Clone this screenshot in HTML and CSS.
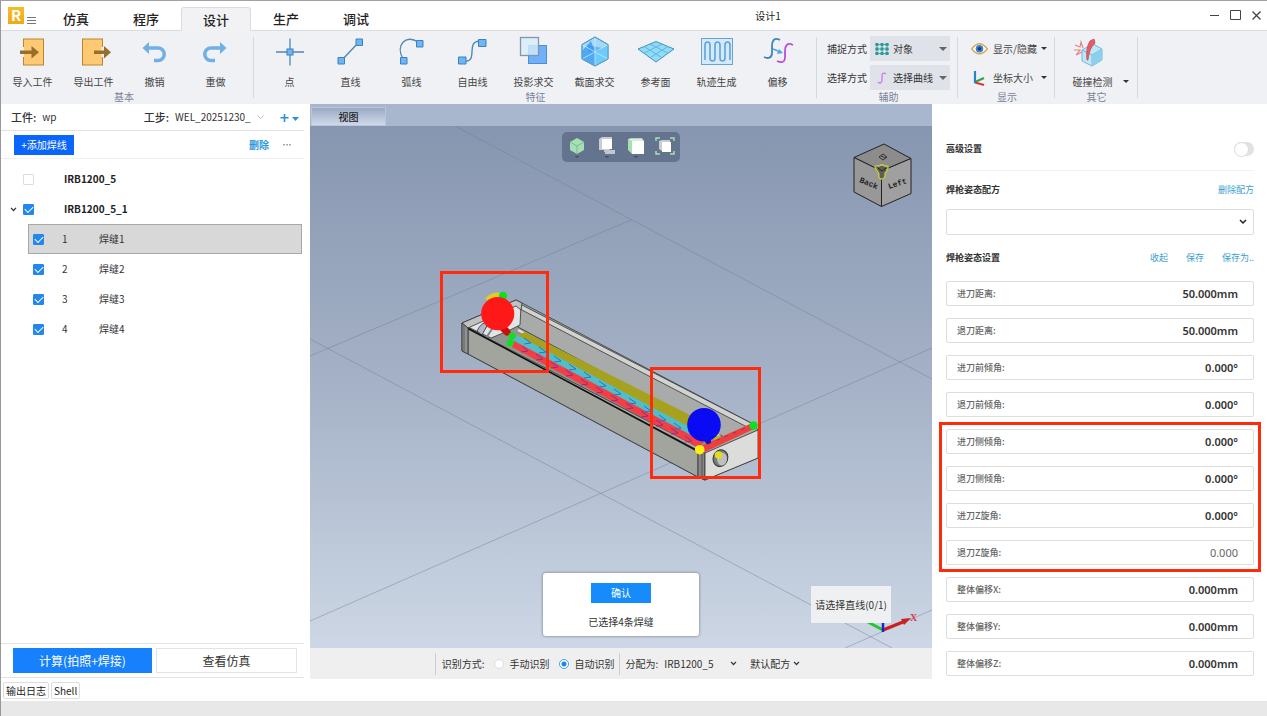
FILE: index.html
```html
<!DOCTYPE html>
<html lang="zh-CN">
<head>
<meta charset="utf-8">
<title>设计1</title>
<link rel="stylesheet" href="styles.css">
</head>
<body>
<div class="app">
  <header class="titlebar">
    <div class="brand">
      <span class="logo">R</span>
      <button class="menu-btn" aria-label="菜单"><svg width="9" height="7" viewBox="0 0 9 7"><path d="M0 .5h9M0 3.5h9M0 6.5h9" stroke="#777" fill="none"/></svg></button>
    </div>
    <nav class="tabs">
      <button class="tab">仿真</button>
      <button class="tab">程序</button>
      <button class="tab tab-active">设计</button>
      <button class="tab">生产</button>
      <button class="tab">调试</button>
    </nav>
    <h1 class="doc-title">设计1</h1>
    <div class="win-controls">
      <button aria-label="最小化"><svg width="11" height="11" viewBox="0 0 11 11"><path d="M1 5.5h9" stroke="#444" fill="none"/></svg></button>
      <button aria-label="最大化"><svg width="11" height="11" viewBox="0 0 11 11"><path d="M.5 .5h10v9h-10z" stroke="#444" fill="none"/></svg></button>
      <button aria-label="关闭"><svg width="11" height="11" viewBox="0 0 11 11"><path d="M1.500 1.500l8 8m0-8l-8 8" stroke="#444" stroke-width="1.300" fill="none"/></svg></button>
    </div>
  </header>

  <div class="ribbon">
    <section class="group group-basic">
      <div class="tools">
        <button class="tool"><svg width="32" height="32" viewBox="0 0 32 32"><rect x="6.500" y="3" width="20" height="26" fill="#ffc973" stroke="#b8862f"/><path d="M5 11v10" stroke="#f0f1f5" stroke-width="4"/><path d="M3 14.500h11.500V10l7.500 6.200-7.500 6.200V18H3z" fill="#96702a"/></svg>导入工件</button>
        <button class="tool"><svg width="32" height="32" viewBox="0 0 32 32"><rect x="4.500" y="3" width="20" height="26" fill="#ffc973" stroke="#b8862f"/><path d="M25 11v10" stroke="#f0f1f5" stroke-width="3"/><path d="M16 14.500h10V10l7 6.200-7 6.200V18H16z" fill="#96702a"/></svg>导出工件</button>
        <button class="tool"><svg width="32" height="32" viewBox="0 0 32 32"><path d="M9 12h10a6 6 0 0 1 0 12.500h-4" fill="none" stroke="#6eb0e8" stroke-width="3.500"/><path d="M3.500 12l6.500-6v12z" fill="#6eb0e8"/></svg>撤销</button>
        <button class="tool"><svg width="32" height="32" viewBox="0 0 32 32"><path d="M21 12H11a6 6 0 0 0 0 12.500h4" fill="none" stroke="#6eb0e8" stroke-width="3.500"/><path d="M26.500 12L20 6v12z" fill="#6eb0e8"/></svg>重做</button>
      </div>
      <p class="group-name">基本</p>
    </section>
    <section class="group group-feature">
      <div class="tools">
        <button class="tool"><svg width="32" height="32" viewBox="0 0 32 32"><path d="M16 2.500v27M2 16h28" stroke="#4f88b4" stroke-width="1.300"/><rect x="13" y="13" width="6" height="6" fill="#6fb5f0" stroke="#3c80bd"/></svg>点</button>
        <button class="tool"><svg width="32" height="32" viewBox="0 0 32 32"><path d="M6 25L24 6" stroke="#4f88b4" stroke-width="1.400"/><path d="M3 21.500h6.500V28H3zM21 3h6.500v6.500H21z" fill="#6fb5f5" stroke="#3c80bd"/></svg>直线</button>
        <button class="tool"><svg width="32" height="32" viewBox="0 0 32 32"><path d="M7 23C-1 9 10-2 22 6" fill="none" stroke="#4f88b4" stroke-width="1.400"/><path d="M4.500 21.500H11V28H4.500zM20.500 4.500H27V11h-6.500z" fill="#6fb5f5" stroke="#3c80bd"/></svg>弧线</button>
        <button class="tool"><svg width="32" height="32" viewBox="0 0 32 32"><path d="M6 25c17 3 1-21 18-20" fill="none" stroke="#4f88b4" stroke-width="1.400"/><path d="M1.500 21H9v7H1.500zM21.500 3.500H29v7h-7.500z" fill="#6fb5f5" stroke="#3c80bd"/></svg>自由线</button>
        <button class="tool"><svg width="32" height="32" viewBox="0 0 32 32"><rect x="10.500" y="9.500" width="18" height="18" fill="#6fb0f8" stroke="#4d8fd2"/><rect x="2.500" y="1.500" width="18" height="18" fill="#d7edf7" fill-opacity=".8" stroke="#8298aa" stroke-width="1.300"/></svg>投影求交</button>
        <button class="tool"><svg width="32" height="32" viewBox="0 0 32 32"><path d="M16 1l13 7.500V23L16 30 3 23V8.500z" fill="#a3d9f6" stroke="#5a9cc4"/><path d="M3 15l9-10 4 11v14L3 23z" fill="#4fa9f4"/><path d="M16 16l13-7.500V23l-13 7z" fill="#6ccbfa"/><path d="M9 9l14 3-7 6-7-3z" fill="#3194ed" opacity=".5"/><path d="M3 8.500L16 16l13-7.500M16 16v14M16 1v15L3 23m13-7l13 7" stroke="#d0efff" stroke-opacity=".7" fill="none"/><path d="M16 1l13 7.500V23L16 30 3 23V8.500z" fill="none" stroke="#5a9cc4"/></svg>截面求交</button>
        <button class="tool"><svg width="36" height="32" viewBox="0 0 36 32"><path d="M18 5.500L36 13 18 26 0 13z" fill="#8edbfa" stroke="#3f94b8"/><path d="M12 8l18 9.300M6 10.500l18 11.300M24 8L6 17.300M30 10.500L12 21.800" stroke="#67b4d6" fill="none"/></svg>参考面</button>
        <button class="tool"><svg width="32" height="32" viewBox="0 0 32 32"><rect x=".5" y="2.500" width="31" height="26" fill="#d5e9fb" stroke="#6aa3ce"/><path d="M4 24V9c0-4 5-4 5 0v13c0 4 5 4 5 0V9c0-4 5-4 5 0v13c0 4 5 4 5 0V9c0-4 5-4 5 0v15" fill="none" stroke="#5da3dc" stroke-width="1.600"/></svg>轨迹生成</button>
        <button class="tool"><svg width="32" height="32" viewBox="0 0 32 32"><path d="M18 4C12 1 10 5 10 10v7c0 5-4 6-8 4" fill="none" stroke="#3f86b8" stroke-width="1.800"/><path d="M31 9c-6-3-8 1-8 6v6c0 6-4 6-8 4" fill="none" stroke="#b650dc" stroke-width="1.800"/><path d="M11 13l5 2" stroke="#4da3e8" stroke-width="1.500"/><path d="M21 17l-6 1 2-5z" fill="#4da3e8"/></svg>偏移</button>
      </div>
      <p class="group-name">特征</p>
    </section>
    <section class="group group-assist">
      <div class="rows">
        <div class="assist-row"><label for="snap">捕捉方式</label>
          <div class="pick"><svg width="16" height="14" viewBox="0 0 16 14"><path d="M3 1v12M8 1v12M13 1v12M1 2.500h14M1 7h14M1 11.500h14" stroke="#55aaa6"/><path d="M1.500 1h3v3h-3zM6.500 1h3v3h-3zM11.500 1h3v3h-3zM1.500 5.500h3v3h-3zM6.500 5.500h3v3h-3zM11.500 5.500h3v3h-3zM1.500 10h3v3h-3zM6.500 10h3v3h-3zM11.500 10h3v3h-3z" fill="#279c97"/></svg><select id="snap"><option>对象</option></select><i class="caret"></i></div></div>
        <div class="assist-row"><label for="choose">选择方式</label>
          <div class="pick"><svg width="16" height="14" viewBox="0 0 16 14"><path d="M12 3C9 1 8 3 8 5v4c0 3-2 4-4 2" fill="none" stroke="#c979e8" stroke-width="1.300"/></svg><select id="choose"><option>选择曲线</option></select><i class="caret"></i></div></div>
      </div>
      <p class="group-name">辅助</p>
    </section>
    <section class="group group-view">
      <div class="rows">
        <button class="mini"><svg width="17" height="14" viewBox="0 0 17 14"><path d="M.7 7Q8.500-3.500 16.300 7 8.500 16.500.7 7z" fill="#fff" stroke="#d3a84a" stroke-width="1.300"/><circle cx="8.500" cy="6.700" r="3.800" fill="#3a7fd0"/><circle cx="8.500" cy="6.700" r="1.700" fill="#173d70"/></svg><span>显示/隐藏</span><i class="caret caret-s"></i></button>
        <button class="mini"><svg width="17" height="18" viewBox="0 0 17 18"><path d="M4 13l9-4" stroke="#2da74a" stroke-width="2.200"/><path d="M4 13.500l9 2.500" stroke="#d93636" stroke-width="2.200"/><path d="M4 2v12" stroke="#2485cc" stroke-width="2.200"/></svg><span>坐标大小</span><i class="caret caret-s"></i></button>
      </div>
      <p class="group-name">显示</p>
    </section>
    <section class="group group-other">
      <div class="tools">
        <button class="tool tool-drop"><svg width="32" height="32" viewBox="0 0 32 32"><path d="M9 14l11-6 9 5v11l-10 6-10-5z" fill="#bfe8f7" stroke="#72b7d4"/><path d="M9 14l10 5 10-6M19 19v11" fill="none" stroke="#72b7d4"/><path d="M19 19l10-6v11l-10 6z" fill="#8dd0ec"/><path d="M14 24c-1-8 0-14 3-19l4-2 1 4c-5 5-6 10-7 17z" fill="#e45d66" stroke="#cb4a56" stroke-width=".8"/><path d="M2 9l5 2 1-5 2 6M1 14l6 0-4 5 6-3" fill="none" stroke="#e98086" stroke-width="1.200"/></svg><span>碰撞检测</span></button>
        <i class="caret caret-s"></i>
      </div>
      <p class="group-name">其它</p>
    </section>
  </div>

  <main class="workspace">
    <aside class="left">
      <div class="job">
        <span class="key">工件:</span><span>wp</span>
        <label class="key step" for="step">工步:</label>
        <div class="plain-select"><select id="step"><option>WEL_20251230_</option></select><svg width="7" height="5" viewBox="0 0 7 5"><path d="M.5.500l3 3 3-3" fill="none" stroke="#bbb"/></svg></div>
        <button class="add-step" aria-label="新建工步"><svg width="19" height="9" viewBox="0 0 19 9"><path d="M4.500 1v8M.5 4.800h8" stroke="#2490e4" stroke-width="1.600"/><path d="M12 4h7l-3.500 4z" fill="#2490e4"/></svg></button>
      </div>
      <div class="actions">
        <button class="add-line">+添加焊线</button>
        <button class="del">删除</button>
        <button class="more" aria-label="更多"><svg width="8" height="2" viewBox="0 0 8 2"><path d="M0 0h2v1.500H0zM3 0h2v1.500H3zM6 0h2v1.500H6z" fill="#aaa"/></svg></button>
      </div>
      <ul class="tree">
        <li class="node"><span class="twist"></span><input type="checkbox" id="n0"><label for="n0">IRB1200_5</label></li>
        <li class="node"><svg class="twist" width="7" height="5" viewBox="0 0 7 5"><path d="M1 .8l2.500 2.700L6 .8" fill="none" stroke="#333" stroke-width="1.200"/></svg><input type="checkbox" id="n1" checked><label for="n1">IRB1200_5_1</label></li>
        <li class="seam seam-on"><input type="checkbox" id="s1" checked><label for="s1"><span>1</span>焊缝1</label></li>
        <li class="seam"><input type="checkbox" id="s2" checked><label for="s2"><span>2</span>焊缝2</label></li>
        <li class="seam"><input type="checkbox" id="s3" checked><label for="s3"><span>3</span>焊缝3</label></li>
        <li class="seam"><input type="checkbox" id="s4" checked><label for="s4"><span>4</span>焊缝4</label></li>
      </ul>
      <div class="run">
        <button class="run-main">计算(拍照+焊接)</button>
        <button class="run-alt">查看仿真</button>
      </div>
    </aside>

    <section class="center">
      <div class="view-tabs"><button class="view-tab">视图</button></div>
      <div class="viewport">
        <svg class="scene" viewBox="310 126 622 522" preserveAspectRatio="xMidYMid slice">
          <g stroke="#707e93" stroke-opacity=".45" fill="none">
            <path d="M455 126L932 379M310 356L631 220M310 339L892 648M310 621L932 348M845 648L932 610"/>
          </g>
          <g stroke="#333" stroke-width=".8" stroke-linejoin="round">
            <path d="M462 323L516 300l6 3L753 424l5 6v28l-53 22-7-3-230-123-6-3z" fill="#a6aaa6"/>
            <path d="M468 328L520 306 747 427l-45 22z" fill="#92948f"/>
            <path d="M520 307L750 427l-26 10L518 327z" fill="#a9abab"/>
            <path d="M520 304L753 424l-6 3L520 309z" fill="#d1d3d1"/>
            <path d="M518 330L720 436" stroke="#e4e4df" stroke-width="2"/>
            <path d="M468 327l17-9 13 2 16-16 7 2-1 19-12 6-17 7z" fill="#e3e4e4"/>
            <path d="M462 323l54-23 6 3-1 7-5-4-48 22z" fill="#bfc2bf"/>
            <path d="M480 335l10-14M486 338l8-12" stroke="#7c8392" stroke-width="2"/>
            <path d="M477 331q4-9 12-9l-7 13z" fill="#aeb8cb"/>
          </g>
          <path d="M516 336l9-4 165 83v18z" fill="#a6a21f"/>
          <path d="M513 340l4-5 176 94 10 13z" fill="#51bdcb"/>
          <path d="M512 347l2-6 190 101-5 6z" fill="#f23f46"/>
          <path d="M524 338l7 5-7 1m15 3l7 5-7 1m15 3l7 5-7 1m15 2l7 5-7 1m15 2l7 5-7 1m15 3l7 5-7 1m15 2l7 5-7 1m15 3l7 5-7 1m15 2l7 5-7 1m15 3l7 5-7 1m15 2l7 5-7 1" fill="none" stroke="#2773c4"/>
          <path d="M522 346l6 5-7 1m15 2l7 5-7 1m15 2l7 5-7 1m15 2l7 5-7 1m15 3l7 5-7 1m15 2l7 5-7 1m15 2l7 5-7 1m15 2l7 5-7 1m15 2l7 5-7 1m15 3l7 5-7 1m15 2l7 5-7 1m14 2l7 5-7 1" fill="none" stroke="#9a2a80"/>
          <g stroke="#333" stroke-width=".8" stroke-linejoin="round">
            <path d="M468 328l230 124v25L468 354z" fill="#a2a49e"/>
            <path d="M467 328l231 123" stroke="#111" stroke-width="1.500"/>
            <path d="M462 323l6 5v26l-6-3z" fill="#8f928f"/>
            <path d="M464 325v27" stroke="#555"/>
            <path d="M698 451l7 2v27l-7-3z" fill="#858785"/>
            <path d="M702 452v27" stroke="#444"/>
            <path d="M705 453l53-23v28l-53 22z" fill="#dcdddb"/>
          </g>
          <path d="M701 446l49-22 6 4-51 24z" fill="#ee3f3f"/>
          <path d="M708 444l42-18" stroke="#983078" stroke-dasharray="4 5"/>
          <ellipse cx="720.500" cy="458" rx="7.300" ry="8.500" fill="#777b7a" stroke="#333" transform="rotate(20 720 458)"/>
          <ellipse cx="722" cy="459" rx="5" ry="6.500" fill="#bcc0bc"/>
          <circle cx="718.500" cy="455" r="3.800" fill="#e3dc1c"/>
          <path d="M703 432l5 9" stroke="#1212a8" stroke-width="6" stroke-linecap="round"/>
          <path d="M714 439l6-3" stroke="#b8b324" stroke-width="3"/>
          <circle cx="704" cy="424.700" r="16.800" fill="#0a0af5"/>
          <circle cx="699.700" cy="449.700" r="4.800" fill="#ffef0a"/>
          <circle cx="753.500" cy="425.500" r="4.200" fill="#0be21a"/>
          <path d="M487 300q7-7 15-4" stroke="#ddcf2a" stroke-width="5" fill="none"/>
          <path d="M497 301l6-4" stroke="#e04a20" stroke-width="4"/>
          <circle cx="503" cy="296" r="4.200" fill="#10df20"/>
          <path d="M500 325l7 7" stroke="#c90e0e" stroke-width="7" stroke-linecap="round"/>
          <circle cx="497.700" cy="313.700" r="16.600" fill="#ff1818"/>
          <circle cx="512" cy="336" r="3.600" fill="#10df20"/>
          <circle cx="510" cy="343" r="3.600" fill="#10df20"/>
          <g fill="none" stroke="#ff2b0c" stroke-width="3">
            <path d="M441.500 272.500h106v99h-106zM651.500 368.500h108v109h-108z"/>
          </g>
          <g stroke="#222" stroke-width="1" stroke-linejoin="round">
            <path d="M884 144l27 14.500-29.500 12.500L854 157.500z" fill="#8c8c8c"/>
            <path d="M854 157.500L881.500 171v35.500L854 192z" fill="#989898"/>
            <path d="M911 158.500L881.500 171v35.500l29.500-13z" fill="#a0a0a0"/>
          </g>
          <path d="M876 169q-3-4 3-3 3-2 6 0 5 0 2 4 0 2-2 3 1 6-4 6-3-1-2-5-1-2-3-5z" fill="#5e6058" stroke="#c9cf3e" stroke-width="1.300"/>
          <path d="M878 168l4 3 4-3" fill="none" stroke="#222"/>
          <text class="cube-text" x="859" y="182" transform="rotate(22 859 182)">Back</text>
          <text class="cube-text" x="889" y="189" transform="rotate(-18 889 189)">Left</text>
          <path d="M879 157l4-3 4 3-4 3zM881 156l5 2" fill="none" stroke="#333"/>
          <path d="M883 630l-17-9" stroke="#22c52b" stroke-width="3"/>
          <path d="M883 630l20-8" stroke="#cc2020" stroke-width="3.500"/>
          <path d="M911 618l-7 7-3-6z" fill="#cc2020"/>
          <path d="M883 632v-9" stroke="#2222cc" stroke-width="2.500"/>
          <text class="axis-text" x="910" y="621">X</text>
        </svg>
        <div class="view-tools">
          <button aria-label="视角"><svg width="20" height="22" viewBox="0 0 20 22"><path d="M10 2l7 4v8l-7 4-7-4V6z" fill="#a5dfb2"/><path d="M3 6l7 4 7-4M10 10v8" stroke="#7dbb92" fill="none"/><path d="M7.500 20h5L10 22z" fill="#444f66"/></svg></button>
          <button aria-label="显示样式"><svg width="20" height="22" viewBox="0 0 20 22"><path d="M3 3l3-2h10v11l-3 2H3z" fill="#c9ccd3"/><path d="M6 3h10v10H6z" fill="#fff"/><path d="M8 15h11M9 17h10" stroke="#dfe2e8" stroke-width="1.500"/><path d="M8.500 20h5L11 22z" fill="#444f66"/></svg></button>
          <button aria-label="剖切"><svg width="20" height="22" viewBox="0 0 20 22"><path d="M2 3l3-1h11l2 3v13H6l-4-4z" fill="#a5dfb2"/><path d="M6 5h12v13H6z" fill="#fff"/><path d="M2 3h13l3 2H6z" fill="#dfeee4"/><path d="M7.500 20h5L10 22z" fill="#444f66"/></svg></button>
          <button aria-label="适合窗口"><svg width="20" height="22" viewBox="0 0 20 22"><path d="M1 5V2h4M15 2h4v3M1 15v3h4M15 18h4v-3" fill="none" stroke="#a5dfb2" stroke-width="1.500"/><path d="M4 5l3-1h8v9l-1 2H7l-3-2z" fill="#c9ccd3"/><path d="M7 6h9v10H7z" fill="#fff"/></svg></button>
        </div>
        <div class="confirm">
          <button>确认</button>
          <p>已选择4条焊缝</p>
        </div>
        <p class="hint">请选择直线(0/1)</p>
      </div>
      <div class="mode-bar">
        <span class="part first">识别方式:</span>
        <label class="opt"><input type="radio" name="mode">手动识别</label>
        <label class="opt"><input type="radio" name="mode" checked>自动识别</label>
        <label class="part assign" for="robot">分配为:</label>
        <div class="plain-select robot"><select id="robot"><option>IRB1200_5</option></select><svg width="7" height="5" viewBox="0 0 7 5"><path d="M1 .8l2.500 2.700L6 .8" fill="none" stroke="#333" stroke-width="1.200"/></svg></div>
        <div class="plain-select recipe"><select aria-label="配方"><option>默认配方</option></select><svg width="7" height="5" viewBox="0 0 7 5"><path d="M1 .8l2.500 2.700L6 .8" fill="none" stroke="#333" stroke-width="1.200"/></svg></div>
      </div>
    </section>

    <aside class="right">
      <div class="adv"><label for="adv">高级设置</label><input class="toggle" type="checkbox" id="adv"></div>
      <div class="sub"><label class="sub-name" for="recipe">焊枪姿态配方</label><a href="#">删除配方</a></div>
      <div class="recipe-box"><select id="recipe"><option></option></select><svg width="8" height="6" viewBox="0 0 8 6"><path d="M1 1l3 3 3-3" fill="none" stroke="#222" stroke-width="1.500"/></svg></div>
      <div class="sub"><span class="sub-name">焊枪姿态设置</span><a href="#">收起</a><a href="#">保存</a><a href="#">保存为..</a></div>
      <div class="fields">
        <div class="field"><label for="f1">进刀距离:</label><input id="f1" value="50.000mm"></div>
        <div class="field"><label for="f2">退刀距离:</label><input id="f2" value="50.000mm"></div>
        <div class="field"><label for="f3">进刀前倾角:</label><input id="f3" value="0.000°"></div>
        <div class="field"><label for="f4">退刀前倾角:</label><input id="f4" value="0.000°"></div>
        <div class="marked">
          <div class="field"><label for="f5">进刀侧倾角:</label><input id="f5" value="0.000°"></div>
          <div class="field"><label for="f6">退刀侧倾角:</label><input id="f6" value="0.000°"></div>
          <div class="field"><label for="f7">进刀Z旋角:</label><input id="f7" value="0.000°"></div>
          <div class="field"><label for="f8">退刀Z旋角:</label><input id="f8" class="unset" value="0.000"></div>
        </div>
        <div class="field"><label for="f9">整体偏移X:</label><input id="f9" value="0.000mm"></div>
        <div class="field"><label for="f10">整体偏移Y:</label><input id="f10" value="0.000mm"></div>
        <div class="field"><label for="f11">整体偏移Z:</label><input id="f11" value="0.000mm"></div>
      </div>
    </aside>
  </main>

  <div class="docks"><button>输出日志</button><button>Shell</button></div>
  <footer class="status"></footer>
</div>
</body>
</html>
```

FILE: styles.css
```css
* { box-sizing: border-box; }
body, h1, p, ul { margin: 0; padding: 0; }
body {
  font: 10px/14px "Noto Sans CJK SC", sans-serif;
  color: #333;
  background: #fff;
}
button, select, input { font: inherit; color: inherit; border: 0; background: none; padding: 0; margin: 0; }
select { appearance: none; }
svg { display: block; flex: none; overflow: visible; }
a { color: #3a9fd0; text-decoration: none; }

.app {
  min-height: 100vh;
  display: flex;
  flex-direction: column;
  border-top: 1px solid #a3a1a5;
  border-left: 1px solid #98989c;
}

/* title bar */
.titlebar { display: flex; height: 30px; border-bottom: 1px solid #d9dde3; }
.brand { width: 40px; padding: 6px 0 0 7px; display: flex; gap: 3px; }
.logo {
  width: 16px; height: 17px;
  background: linear-gradient(#f8bd22, #eda91a);
  color: #fff;
  font: bold 15px/16px "Noto Sans CJK SC", sans-serif;
  text-align: center;
}
.menu-btn { align-self: center; padding-top: 3px; }
.tabs { display: flex; align-items: flex-end; }
.tab { width: 70px; height: 23px; font-size: 13px; font-weight: 500; line-height: 24px; color: #222; }
.tab-active {
  height: 24px;
  margin-bottom: -1px;
  background: #f2f2f4;
  border: 1px solid #d9dbe0;
  border-bottom: 0;
  border-radius: 3px 3px 0 0;
}
.doc-title { flex: 1; padding-right: 64px; font-size: 10px; font-weight: 400; line-height: 29px; text-align: center; color: #222; }
.win-controls { display: flex; gap: 10px; align-items: center; padding-right: 5px; }

/* ribbon */
.ribbon { display: flex; height: 73px; background: #f0f1f5; }
.group { display: flex; flex-direction: column; justify-content: space-between; position: relative; padding-top: 5px; }
.group::after { content: ""; width: 1px; background: #d5d8df; position: absolute; right: 0; top: 6px; bottom: 6px; }
.group-name { text-align: center; color: #7a8296; line-height: 14px; }
.tools { display: flex; }
.tool { width: 61px; display: flex; flex-direction: column; align-items: center; gap: 7px; color: #444; line-height: 14px; }
.group-basic { padding-left: 1px; padding-right: 8px; }
.group-feature { padding-left: 5px; padding-right: 9px; }
.group-feature .group-name { padding-left: 4px; }
.group-assist { width: 141px; padding-left: 10px; }
.group-assist .group-name { padding-right: 8px; }
.rows { display: flex; flex-direction: column; gap: 4px; }
.assist-row { display: flex; align-items: center; gap: 3px; }
.pick { width: 80px; height: 25px; display: flex; align-items: center; padding: 0 3px 0 4px; background: #dfe2e9; }
.pick select { flex: 1; min-width: 0; padding-left: 3px; }
.caret { border: 4px solid transparent; border-top-color: #666; border-bottom: 0; flex: none; }
.caret-s { border-width: 3px 3px 0; border-top-color: #333; }
.group-view { width: 97px; padding-left: 13px; }
.group-view .group-name { padding-right: 12px; }
.mini { height: 25px; display: flex; align-items: center; gap: 5px; color: #444; }
.mini span { width: 43px; text-align: left; white-space: nowrap; }
.group-other { width: 83px; padding-left: 7px; }
.group-other .group-name { padding-right: 7px; }
.group-other .tools { align-items: flex-end; }
.group-other .caret { margin-bottom: 6px; }
.tool-drop svg { margin-right: 8px; }

/* workspace */
.workspace { flex: 1; display: flex; }
.left { width: 309px; display: flex; flex-direction: column; padding-right: 6px; }
.job { height: 27px; display: flex; align-items: center; gap: 6px; padding-left: 10px; border-bottom: 1px solid #e3e3e3; }
.key { font-size: 11px; font-weight: 500; }
.step { margin-left: auto; }
.plain-select { display: flex; align-items: center; gap: 6px; }
.add-step { margin-left: 10px; margin-right: 5px; }
.actions { height: 28px; display: flex; align-items: center; padding: 0 13px; border-bottom: 1px solid #f0f0f0; }
.add-line { width: 60px; height: 20px; background: #0a66fb; color: #fff; }
.del { margin-left: auto; margin-right: 14px; color: #2c98e0; font-weight: 700; }
.tree { list-style: none; padding-top: 5px; flex: 1; }
.node, .seam { height: 30px; display: flex; align-items: center; }
.node { padding-left: 9px; font-weight: 700; color: #222; }
.twist { width: 7px; }
.node input { margin-left: 6px; margin-right: 30px; }
.seam { margin-left: 27px; margin-right: 2px; padding-left: 4px; border: 1px solid transparent; }
.seam-on { background: #d8d8d8; border-color: #a8a8a8; }
.seam label { display: flex; margin-left: 18px; }
.seam span { width: 37px; }
.tree input {
  appearance: none;
  width: 11px; height: 11px;
  border: 1px solid #ddd;
  border-radius: 1px;
  display: grid;
  place-items: center;
}
.tree input:checked { background: #2287ee; border-color: #2287ee; }
.tree input:checked::after { content: ""; width: 7px; height: 4px; border: solid #fff; border-width: 0 0 1px 1px; rotate: -45deg; margin-bottom: 2px; }
.run { display: flex; gap: 4px; padding: 4px 7px 4px 12px; border: solid #e3e3e3; border-width: 1px 0; margin-bottom: 2px; }
.run button { flex: 1; height: 25px; font-size: 12px; }
.run-main { background: #1680fd; color: #fff; }
.run .run-alt { border: 1px solid #e3e3e3; }

/* 3D view */
.center { flex: 1; display: flex; flex-direction: column; min-width: 0; }
.view-tabs { height: 22px; padding: 3px 1px 0; background: #a9b7ce; display: flex; }
.view-tab { width: 75px; background: linear-gradient(#9aaac4, #cfd9e9); border: 1px solid #b9c5d8; line-height: 16px; color: #222; font-weight: 500; }
.viewport { flex: 1; position: relative; background: linear-gradient(#8796b0, #a5b2c7 50%, #cdd7e5); overflow: hidden; }
.scene { position: absolute; inset: 0; width: 100%; height: 100%; }
.cube-text { font: bold 8px "Liberation Mono", monospace; fill: #222; }
.axis-text { font: bold 10px "Liberation Serif", serif; fill: #d93a50; }
.view-tools {
  position: absolute; top: 6px; left: 50%; translate: -50%;
  width: 118px; height: 30px;
  display: flex; justify-content: space-between; align-items: center;
  padding: 0 5px;
  border-radius: 5px;
  background: #64748f;
}
.confirm {
  position: absolute; bottom: 12px; left: 50%; translate: -50%;
  width: 156px;
  padding: 10px 0 6px;
  display: flex; flex-direction: column; align-items: center; gap: 11px;
  background: #fff;
  border-radius: 3px;
  box-shadow: 0 0 3px #68727f;
}
.confirm button { width: 60px; height: 20px; background: #168bfb; color: #fff; }
.confirm p { line-height: 16px; }
.hint { position: absolute; right: 41px; bottom: 25px; padding: 0 4px; background: #eff0f2; line-height: 37px; }
.mode-bar { height: 31px; display: flex; align-items: center; justify-content: center; padding-right: 7px; background: #efefef; margin-bottom: 1px; }
.part { border-left: 1px solid #ccc; padding-left: 6px; line-height: 22px; }
.opt { display: flex; align-items: center; gap: 6px; margin-left: 9px; }
.opt input { appearance: none; width: 10px; height: 10px; border: 1px solid #ddd; border-radius: 50%; background: #fff; }
.opt input:checked { border-color: #4aa2e8; background: radial-gradient(#1688ee 0 2px, #fff 3px); }
.assign { margin-left: 4px; }
.robot { margin-left: 6px; gap: 16px; }
.recipe { margin-left: 13px; gap: 3px; }

/* parameters */
.right { width: 335px; padding: 24px 13px 2px 14px; }
.adv { height: 43px; display: flex; justify-content: space-between; align-items: center; font-size: 9px; font-weight: 700; border-bottom: 1px solid #f2f2f2; }
.toggle { appearance: none; width: 20px; height: 14px; border-radius: 7px; background: #e2e2e2; display: flex; align-items: center; }
.toggle::after { content: ""; width: 13px; height: 13px; border-radius: 50%; background: #fff; border: 1px solid #ddd; }
.sub { height: 38px; display: flex; align-items: center; gap: 18px; font-size: 9px; }
.sub-name { font-weight: 700; margin-right: auto; }
.recipe-box { display: grid; align-items: center; }
.recipe-box select, .recipe-box svg { grid-area: 1 / 1; }
.recipe-box select { height: 26px; border: 1px solid #ddd; border-radius: 2px; }
.recipe-box svg { justify-self: end; margin-right: 7px; pointer-events: none; }
.recipe-box + .sub { height: 46px; }
.fields, .marked { display: flex; flex-direction: column; gap: 12px; }
.marked { outline: 3px solid #ff2a0a; outline-offset: 4px; }
.field { height: 25px; display: flex; align-items: center; padding: 0 15px 0 10px; border: 1px solid #ddd; border-radius: 2px; }
.field label { font-size: 9px; font-weight: 500; color: #666; }
.field input { flex: 1; min-width: 0; text-align: right; font-family: "Noto Sans", "Noto Sans CJK SC", sans-serif; font-size: 11px; font-weight: 600; }
.field .unset { font-weight: 400; color: #666; }

/* bottom docks */
.docks { height: 21px; display: flex; align-items: center; gap: 2px; padding-left: 2px; }
.docks button { height: 17px; padding: 0 2px; border: 1px solid #ddd; border-radius: 2px; line-height: 14px; color: #222; }
.status { height: 15px; background: #e8e8e8; }
```
